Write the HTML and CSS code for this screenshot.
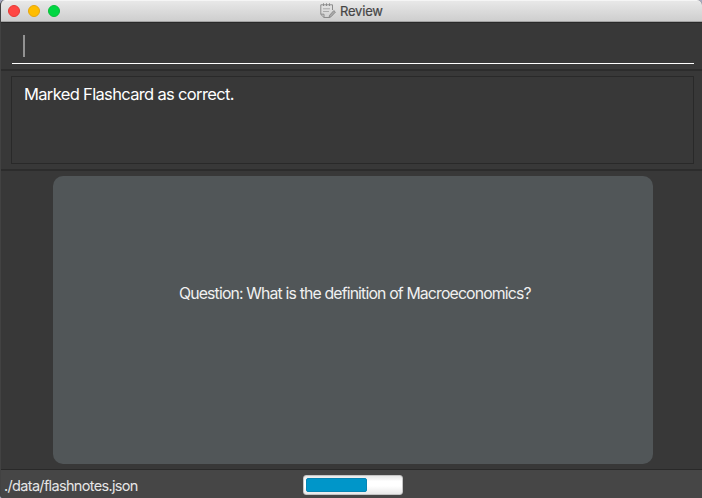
FILE: index.html
```html
<!DOCTYPE html>
<html lang="en">
<head>
<meta charset="utf-8">
<title>Review</title>
<link rel="stylesheet" href="styles.css">
</head>
<body>
<div class="window">
  <header class="titlebar">
    <div class="lights"><i class="light red"></i><i class="light yellow"></i><i class="light green"></i></div>
    <svg class="note-icon" width="16" height="16" viewBox="0 0 16 16" fill="none" stroke="#8c8c8c" stroke-width="1">
      <path d="M12.5 7V1.8H.8V11.4L4 14.5H9.5M.8 11.2H4V14.5"/>
      <path d="M3.5 .3V3M6.5 .3V3M9.5 .3V3"/>
      <path d="M3 5.8H10M3 8.5H9" stroke="#aaa"/>
      <path d="M13.8 7.6L15.4 9.1L11 13.8L9 14.6L9.6 12.3Z" fill="#aaa"/>
    </svg>
    <h1 class="title">Review</h1>
  </header>
  <section class="command"><div class="field"><span class="caret"></span></div></section>
  <section class="result"><div class="result-box"><span class="message">Marked Flashcard as correct.</span></div></section>
  <main class="stage"><div class="card"><p class="question">Question: What is the definition of Macroeconomics?</p></div></main>
  <footer class="status">
    <span class="path">./data/flashnotes.json</span>
    <div class="progress"><div class="bar"></div></div>
  </footer>
</div>
</body>
</html>
```
FILE: styles.css
```css
* { box-sizing: border-box; }
body { margin: 0; background: #a5a9c0; font-family: Inter, "Liberation Sans", sans-serif; }
.window { width: 702px; height: 498px; display: flex; flex-direction: column; overflow: hidden; background: #383838; border-radius: 5px 5px 0 3px; border-left: 1px solid #424242; }
.titlebar { height: 22px; flex: none; display: flex; align-items: center; margin-left: -1px; background: linear-gradient(#e8e8e8, #cecece); border-top: 1px solid #f5f5f5; border-bottom: 1px solid #a2a2a2; }
.lights { display: flex; gap: 8px; width: 320px; padding-left: 8px; }
.light { width: 12px; height: 12px; border-radius: 50%; border: 1px solid; }
.red { background: #ff4744; border-color: #e53935; }
.yellow { background: #ffbd00; border-color: #e5a50c; }
.green { background: #00d742; border-color: #08bd3a; }
.title { margin: 0 0 0 4px; font-size: 13px; font-weight: 400; line-height: 20px; color: #454545; letter-spacing: -.2px; -webkit-text-stroke: .2px #454545; }
.command { height: 49px; flex: none; padding: 0 8px 0 11px; border-top: 1px solid #292929; border-bottom: 2px solid #2c2c2c; }
.field { height: 41px; border-bottom: 1px solid #fff; padding: 12px 11px 0; }
.caret { display: block; width: 2px; height: 22px; background: #929292; }
.result { height: 100px; flex: none; padding: 5px 8px 5px 10px; border-bottom: 2px solid #2c2c2c; }
.result-box { height: 88px; border: 1px solid #292929; padding: 7px 12px; }
.message { display: inline-block; font-size: 16.5px; line-height: 20px; color: #fff; letter-spacing: -.66px; white-space: nowrap; }
.stage { height: 298px; flex: none; padding: 5px 0 0 52px; }
.card { width: 600px; height: 288px; border-radius: 10px; background: #515658; display: flex; align-items: flex-start; padding: 108px 0 0 126px; }
.question { margin: 0; font-size: 15.8px; line-height: 20px; color: #f0f0f0; letter-spacing: -.84px; white-space: nowrap; }
.status { height: 29px; flex: none; display: flex; align-items: flex-start; background: #464646; border-top: 1px solid #292929; }
.path { width: 302px; padding: 6px 0 0 3px; font-size: 14.5px; line-height: 20px; color: #e6e6e6; letter-spacing: -.67px; white-space: nowrap; }
.progress { width: 100px; height: 20px; margin-top: 5px; padding: 2px; border: 1px solid #c5c5c5; border-radius: 3px; background: linear-gradient(#e9e9e9, #fff 30%, #fff 55%, #e9e9e9); }
.bar { width: 61px; height: 14px; border-radius: 2px; border: 1px solid #0785b4; background: #0096c9; }
```
